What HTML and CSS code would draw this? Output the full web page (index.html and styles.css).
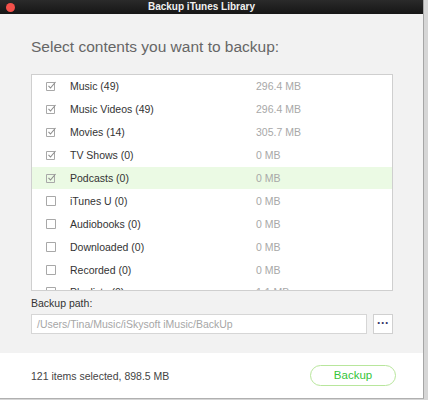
FILE: index.html
```html
<!DOCTYPE html>
<html>
<head>
<meta charset="utf-8">
<link rel="stylesheet" href="styles.css">
</head>
<body>
<div class="window">
  <div class="titlebar">
    <span class="close"></span>
    <span class="title">Backup iTunes Library</span>
  </div>
  <div class="content">
    <h1 class="heading">Select contents you want to backup:</h1>
    <div class="list">
      <div class="row"><span class="cb checked"><svg viewBox="0 0 11 10" width="11" height="10"><path d="M0.5 1.5h8v8h-8z" fill="none" stroke="#a8a8a8"/><path d="M2.5 4.8l2 2.2 5-6" fill="none" stroke="#8c8c8c" stroke-width="1.1"/></svg></span><span class="name">Music (49)</span><span class="size">296.4 MB</span></div>
      <div class="row"><span class="cb checked"><svg viewBox="0 0 11 10" width="11" height="10"><path d="M0.5 1.5h8v8h-8z" fill="none" stroke="#a8a8a8"/><path d="M2.5 4.8l2 2.2 5-6" fill="none" stroke="#8c8c8c" stroke-width="1.1"/></svg></span><span class="name">Music Videos (49)</span><span class="size">296.4 MB</span></div>
      <div class="row"><span class="cb checked"><svg viewBox="0 0 11 10" width="11" height="10"><path d="M0.5 1.5h8v8h-8z" fill="none" stroke="#a8a8a8"/><path d="M2.5 4.8l2 2.2 5-6" fill="none" stroke="#8c8c8c" stroke-width="1.1"/></svg></span><span class="name">Movies (14)</span><span class="size">305.7 MB</span></div>
      <div class="row"><span class="cb checked"><svg viewBox="0 0 11 10" width="11" height="10"><path d="M0.5 1.5h8v8h-8z" fill="none" stroke="#a8a8a8"/><path d="M2.5 4.8l2 2.2 5-6" fill="none" stroke="#8c8c8c" stroke-width="1.1"/></svg></span><span class="name">TV Shows (0)</span><span class="size">0 MB</span></div>
      <div class="row hl"><span class="cb checked"><svg viewBox="0 0 11 10" width="11" height="10"><path d="M0.5 1.5h8v8h-8z" fill="none" stroke="#a8a8a8"/><path d="M2.5 4.8l2 2.2 5-6" fill="none" stroke="#8c8c8c" stroke-width="1.1"/></svg></span><span class="name">Podcasts (0)</span><span class="size">0 MB</span></div>
      <div class="row"><span class="cb"><svg viewBox="0 0 11 10" width="11" height="10"><path d="M0.5 0.5h9v9h-9z" fill="#fff" stroke="#a8a8a8"/></svg></span><span class="name">iTunes U (0)</span><span class="size">0 MB</span></div>
      <div class="row"><span class="cb"><svg viewBox="0 0 11 10" width="11" height="10"><path d="M0.5 0.5h9v9h-9z" fill="#fff" stroke="#a8a8a8"/></svg></span><span class="name">Audiobooks (0)</span><span class="size">0 MB</span></div>
      <div class="row"><span class="cb"><svg viewBox="0 0 11 10" width="11" height="10"><path d="M0.5 0.5h9v9h-9z" fill="#fff" stroke="#a8a8a8"/></svg></span><span class="name">Downloaded (0)</span><span class="size">0 MB</span></div>
      <div class="row"><span class="cb"><svg viewBox="0 0 11 10" width="11" height="10"><path d="M0.5 0.5h9v9h-9z" fill="#fff" stroke="#a8a8a8"/></svg></span><span class="name">Recorded (0)</span><span class="size">0 MB</span></div>
      <div class="row"><span class="cb"><svg viewBox="0 0 11 10" width="11" height="10"><path d="M0.5 0.5h9v9h-9z" fill="#fff" stroke="#a8a8a8"/></svg></span><span class="name">Playlists (0)</span><span class="size">1.1 MB</span></div>
    </div>
    <div class="path-label">Backup path:</div>
    <div class="path-row">
      <div class="path-input">/Users/Tina/Music/iSkysoft iMusic/BackUp</div>
      <div class="browse">&middot;&middot;&middot;</div>
    </div>
  </div>
  <div class="footer">
    <span class="summary">121 items selected, 898.5 MB</span>
    <span class="backup-btn">Backup</span>
  </div>
</div>
</body>
</html>
```
FILE: styles.css
```css
html, body {
  margin: 0;
  padding: 0;
  background: #d6d6d6;
  font-family: "Liberation Sans", Arial, sans-serif;
}
.window {
  width: 423px;
  height: 398px;
  display: flex;
  flex-direction: column;
  background: #f2f2f2;
  border-right: 1px solid #a6a6a6;
  border-bottom: 1px solid #b0b0b0;
}
.titlebar {
  height: 14px;
  flex: none;
  background: linear-gradient(#2a2a2a, #161616);
  display: flex;
  align-items: center;
  justify-content: center;
  position: relative;
}
.close {
  position: absolute;
  left: 6px;
  top: 3px;
  width: 9px;
  height: 9px;
  border-radius: 50%;
  background: #f4504a;
}
.title {
  color: #f0f0f0;
  font-size: 10px;
  font-weight: bold;
  line-height: 14px;
  margin-left: -20px;
}
.content {
  flex: 1;
  padding: 23px 30px 0 31px;
  display: flex;
  flex-direction: column;
}
.heading {
  margin: 0;
  font-weight: normal;
  font-size: 15.5px;
  line-height: 20px;
  color: #666;
}
.list {
  margin-top: 17px;
  height: 215px;
  background: #fff;
  border: 1px solid #cfcfcf;
  overflow: hidden;
}
.row {
  height: 22.9px;
  display: flex;
  align-items: center;
  padding-left: 14px;
  font-size: 10.5px;
  color: #333;
}
.row.hl {
  background: #ebfae4;
}
.cb {
  width: 11px;
  height: 10px;
  display: flex;
}
.name {
  margin-left: 13px;
  width: 186px;
}
.size {
  color: #a8a8a8;
}
.path-label {
  margin-top: 6px;
  font-size: 10.5px;
  line-height: 13px;
  color: #333;
}
.path-row {
  margin-top: 4px;
  display: flex;
  gap: 6px;
}
.path-input {
  width: 329px;
  height: 18px;
  background: #fff;
  border: 1px solid #d6d6d6;
  font-size: 10.5px;
  line-height: 18px;
  color: #a6a6a6;
  padding-left: 5px;
}
.browse {
  width: 18px;
  height: 18px;
  background: #fff;
  border: 1px solid #d0d0d0;
  font-size: 12px;
  line-height: 17px;
  text-align: center;
  color: #336;
  font-weight: bold;
}
.footer {
  height: 45px;
  flex: none;
  background: #fff;
  display: flex;
  align-items: center;
  justify-content: space-between;
  padding: 0 27px 0 31px;
}
.summary {
  font-size: 10.5px;
  color: #444;
}
.backup-btn {
  width: 84px;
  height: 19px;
  border: 1px solid #b8e69c;
  border-radius: 11px;
  text-align: center;
  line-height: 19px;
  font-size: 11.5px;
  color: #35c53a;
}
```
